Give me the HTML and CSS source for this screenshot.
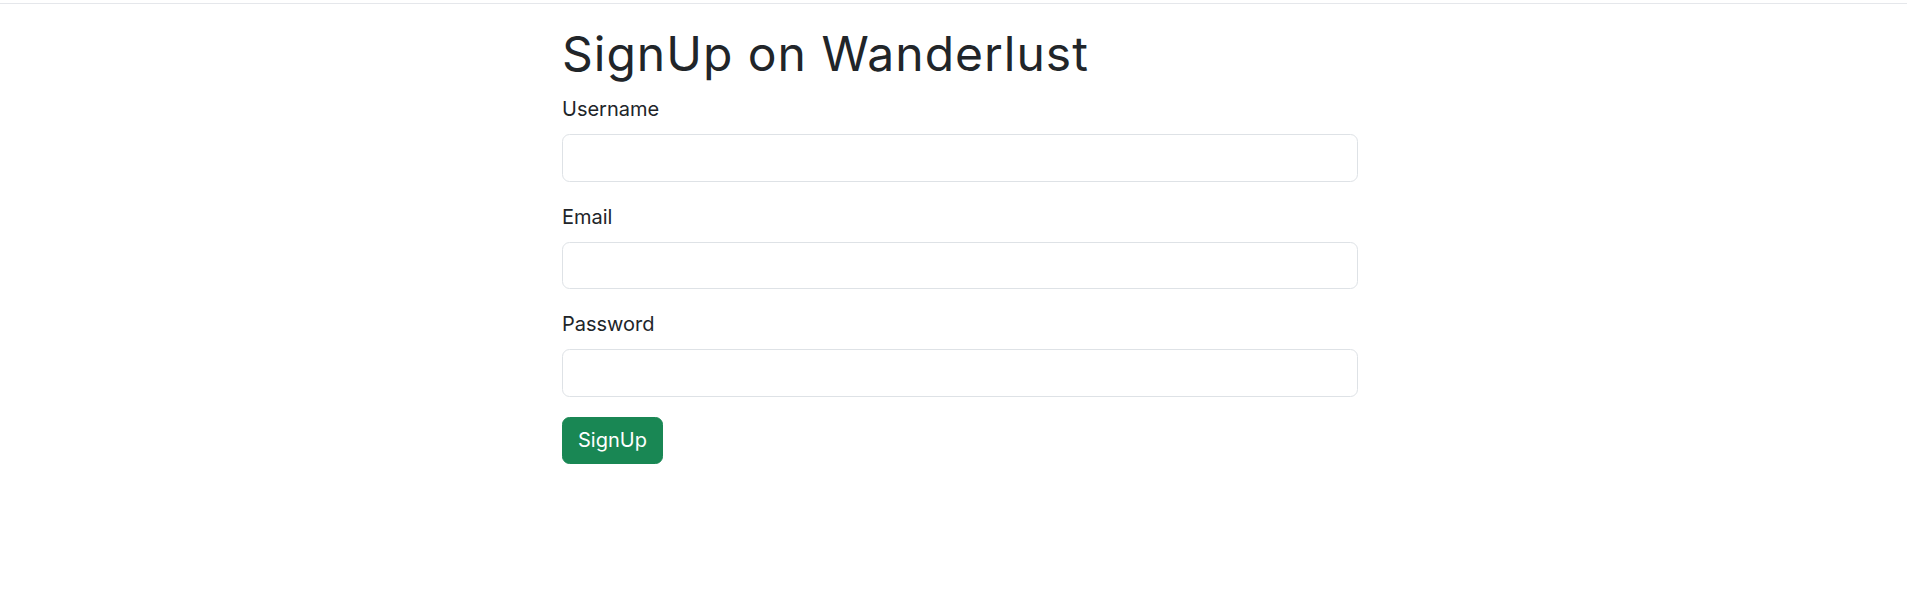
FILE: index.html
```html
<!DOCTYPE html>
<html lang="en">
<head>
<meta charset="utf-8">
<title>SignUp on Wanderlust</title>
<link rel="stylesheet" href="styles.css">
</head>
<body>
<div class="topbar"></div>
<main class="page">
  <h1 class="title">SignUp on Wanderlust</h1>
  <form class="form">
    <div class="field">
      <label class="label" for="username">Username</label>
      <input class="input" id="username" type="text">
    </div>
    <div class="field">
      <label class="label" for="email">Email</label>
      <input class="input" id="email" type="email">
    </div>
    <div class="field">
      <label class="label" for="password">Password</label>
      <input class="input" id="password" type="password">
    </div>
    <button class="btn" type="submit">SignUp</button>
  </form>
</main>
</body>
</html>
```
FILE: styles.css
```css
* { box-sizing: border-box; }
html, body { margin: 0; padding: 0; background: #fff; }
body {
  font-family: Inter, "Noto Sans", "Liberation Sans", sans-serif;
  color: #212529;
}
.topbar {
  height: 4px;
  background: #fff;
  border-bottom: 1px solid #e5e7eb;
}
.page {
  margin-left: 562px;
  width: 796px;
  padding-top: 20px;
}
.title {
  margin: 0 0 10px;
  font-size: 48px;
  font-weight: 400;
  line-height: 60px;
  letter-spacing: 1px;
}
.form { display: flex; flex-direction: column; }
.field { margin-bottom: 20px; display: flex; flex-direction: column; }
.label {
  font-size: 20px;
  line-height: 30px;
  margin-bottom: 10px;
}
.input {
  height: 47.5px;
  border: 1.25px solid #dee2e6;
  border-radius: 7.5px;
  background: #fff;
  font: inherit;
  padding: 7.5px 15px;
}
.btn {
  align-self: flex-start;
  height: 47px;
  padding: 0 15px;
  border: 1.25px solid #198754;
  border-radius: 7.5px;
  background: #198754;
  color: #fff;
  font-family: inherit;
  font-size: 20px;
  line-height: 30px;
}
```
